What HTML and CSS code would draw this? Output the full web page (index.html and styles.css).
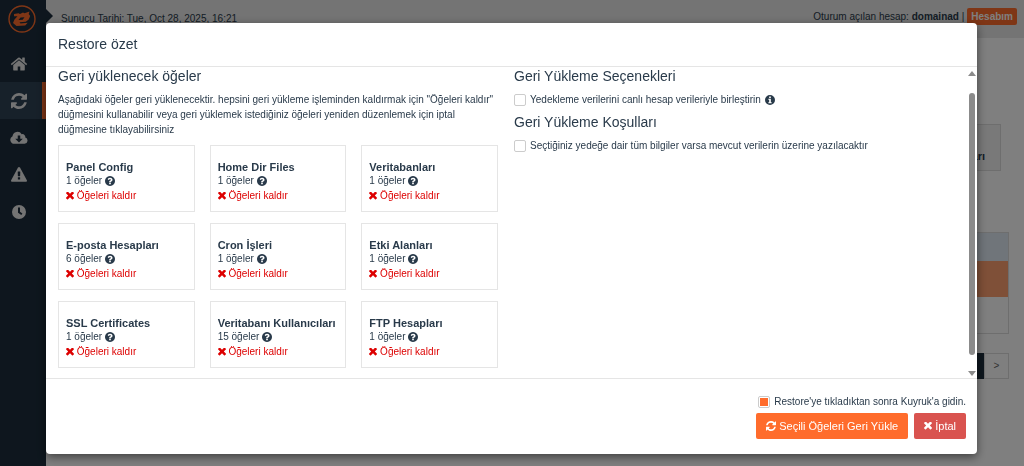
FILE: index.html
```html
<!DOCTYPE html>
<html lang="tr">
<head>
    <meta charset="UTF-8">
    <meta name="viewport" content="width=device-width, initial-scale=1.0">
    <title>Restore özet</title>
    <link rel="stylesheet" href="styles.css">
</head>
<body>
    <svg class="sprite" aria-hidden="true">
        <symbol id="home" viewBox="0 0 1792 1792"><path d="M1472 992v480q0 26-19 45t-45 19h-384v-384h-256v384h-384q-26 0-45-19t-19-45v-480q0-1 .5-3t.5-3l575-474 575 474q1 2 1 6zm223-69l-62 74q-8 9-21 11h-3q-13 0-21-7l-692-577-692 577q-12 8-24 7-13-2-21-11l-62-74q-8-10-7-23.5t11-21.5l719-599q32-26 76-26t76 26l244 204v-195q0-14 9-23t23-9h192q14 0 23 9t9 23v408l219 182q10 8 11 21.5t-7 23.5z"/></symbol>
        <symbol id="refresh" viewBox="128 128 1536 1536"><path d="M1639 1056q0 5-1 7-64 268-268 434.5t-478 166.5q-146 0-282.5-55t-243.5-157l-129 129q-19 19-45 19t-45-19-19-45v-448q0-26 19-45t45-19h448q26 0 45 19t19 45-19 45l-137 137q71 66 161 102t187 36q134 0 250-65t186-179q11-17 53-117 8-23 30-23h192q13 0 22.5 9.5t9.5 22.5zm25-800v448q0 26-19 45t-45 19h-448q-26 0-45-19t-19-45 19-45l138-138q-148-137-349-137-134 0-250 65t-186 179q-11 17-53 117-8 23-30 23h-199q-13 0-22.5-9.5t-9.500-22.5v-7q65-268 270-434.5t480-166.5q146 0 284 55.5t245 156.5l130-129q19-19 45-19t45 19 19 45z"/></symbol>
        <symbol id="cloud" viewBox="0 1 20 15"><path fill-rule="evenodd" d="M4.800 15a4.500 4.500 0 0 1-2-8.500A5.500 5.500 0 0 1 13 4.300a3.200 3.200 0 0 1 4 3.700A3.600 3.600 0 0 1 16.200 15zM8.600 5.800v3.500H5.800L10 13.500l4.200-4.200h-2.800V5.800z"/></symbol>
        <symbol id="warning" viewBox="0 0 1792 1792"><path d="M1024 1375v-190q0-14-9.500-23.500t-22.500-9.500h-192q-13 0-22.500 9.500t-9.500 23.500v190q0 14 9.500 23.500t22.500 9.500h192q13 0 22.500-9.500t9.500-23.500zm-2-374l18-459q0-12-10-19-13-11-24-11h-220q-11 0-24 11-10 7-10 21l17 457q0 10 10 16.500t24 6.500h185q14 0 23.500-6.500t10.500-16.500zm-14-934l768 1408q35 63-2 126-17 29-46.500 46t-63.500 17h-1536q-34 0-63.500-17t-46.500-46q-37-63-2-126l768-1408q17-31 47-49t65-18 65 18 47 49z"/></symbol>
        <symbol id="clock" viewBox="0 0 16 16"><path fill-rule="evenodd" d="M8 1a7 7 0 1 1 0 14A7 7 0 0 1 8 1zM7 3.500v5.200l3.300 2.400 1.100-1.500L9 7.800V3.500z"/></symbol>
        <symbol id="times" viewBox="300 500 1192 1056"><path d="M1490 1322q0 40-28 68l-136 136q-28 28-68 28t-68-28l-294-294-294 294q-28 28-68 28t-68-28l-136-136q-28-28-28-68t28-68l294-294-294-294q-28-28-28-68t28-68l136-136q28-28 68-28t68 28l294 294 294-294q28-28 68-28t68 28l136 136q28 28 28 68t-28 68l-294 294 294 294q28 28 28 68z"/></symbol>
        <symbol id="question" viewBox="128 128 1536 1536"><path d="M1024 1376v-192q0-14-9-23t-23-9h-192q-14 0-23 9t-9 23v192q0 14 9 23t23 9h192q14 0 23-9t9-23zm256-672q0-88-55.500-163t-138.500-116-170-41q-243 0-371 213-15 24 8 42l132 100q7 6 19 6 16 0 25-12 53-68 86-92 34-24 86-24 48 0 85.500 26t37.500 59q0 38-20 61t-68 45q-63 28-115.500 86.500t-52.500 125.500v36q0 14 9 23t23 9h192q14 0 23-9t9-23q0-19 21.500-49.500t54.500-49.500q32-18 49-28.500t46-35 44.500-48 28-60.500 12.500-81zm384 192q0 209-103 385.500t-279.500 279.500-385.500 103-385.500-103-279.500-279.500-103-385.500 103-385.500 279.500-279.500 385.500-103 385.500 103 279.500 279.500 103 385.500z"/></symbol>
        <symbol id="info" viewBox="0 0 12 12"><path fill-rule="evenodd" d="M6 0a6 6 0 1 1 0 12A6 6 0 0 1 6 0zM5 1.800v1.700h2V1.800zM4 4.500v1.200h1v3H4V10h4V8.700H7V4.500z"/></symbol>
    </svg>

    <div class="page">
        <nav class="sidebar">
            <a class="logo" href="#" aria-label="Logo">
                <svg viewBox="0 0 28 28"><circle cx="14" cy="14" r="13" fill="none" stroke="#ff6c2c" stroke-width="1.400"/><path fill="#ff6c2c" fill-rule="evenodd" d="M6 9l4.500-.8L12 9l3-1.500 1.500.8L21.500 6.500l-.8 2.500 1.500 2-1.500 3.500-3 2.300-6.200.4 1 1.300 7.200-.8-2.500 2.800-8.700.5L5 18l1.500-3.500 3-3.300L6 11.300zM12.500 12.500l-2 2.500 4.200-.3 1.800-2.500z"/></svg>
            </a>
            <a class="nav-item" href="#" aria-label="Ana sayfa"><svg class="icon"><use href="#home"/></svg></a>
            <a class="nav-item active" href="#" aria-label="Geri yükle"><svg class="icon small"><use href="#refresh"/></svg></a>
            <a class="nav-item" href="#" aria-label="İndir"><svg class="icon"><use href="#cloud"/></svg></a>
            <a class="nav-item" href="#" aria-label="Uyarılar"><svg class="icon small"><use href="#warning"/></svg></a>
            <a class="nav-item" href="#" aria-label="Geçmiş"><svg class="icon small"><use href="#clock"/></svg></a>
        </nav>
        <div class="content">
            <header class="topbar">
                <span class="pointer"></span>
                <span class="server-date">Sunucu Tarihi: Tue, Oct 28, 2025, 16:21</span>
                <span class="account">Oturum açılan hesap: <b>domainad</b> |</span>
                <button class="account-btn" type="button">Hesabım</button>
            </header>
            <main class="main">
                <div class="tile">arı</div>
                <div class="list">
                    <div class="list-head"></div>
                    <div class="list-row selected"></div>
                    <div class="list-row"></div>
                </div>
                <div class="pager">
                    <span class="current"></span>
                    <a href="#">&gt;</a>
                </div>
            </main>
        </div>
    </div>

    <div class="backdrop">
        <div class="modal" role="dialog" aria-labelledby="modal-title">
            <div class="modal-header">
                <h1 id="modal-title">Restore özet</h1>
            </div>
            <div class="modal-body">
                <div class="columns">
                    <section>
                        <h2>Geri yüklenecek öğeler</h2>
                        <p>Aşağıdaki öğeler geri yüklenecektir. hepsini geri yükleme işleminden kaldırmak için "Öğeleri kaldır" düğmesini kullanabilir veya geri yüklemek istediğiniz öğeleri yeniden düzenlemek için iptal düğmesine tıklayabilirsiniz</p>
                        <div class="items">
                            <div class="item">
                                <h3>Panel Config</h3>
                                <div class="count">1 öğeler <svg class="icon"><use href="#question"/></svg></div>
                                <a href="#"><svg class="icon"><use href="#times"/></svg> Öğeleri kaldır</a>
                            </div>
                            <div class="item">
                                <h3>Home Dir Files</h3>
                                <div class="count">1 öğeler <svg class="icon"><use href="#question"/></svg></div>
                                <a href="#"><svg class="icon"><use href="#times"/></svg> Öğeleri kaldır</a>
                            </div>
                            <div class="item">
                                <h3>Veritabanları</h3>
                                <div class="count">1 öğeler <svg class="icon"><use href="#question"/></svg></div>
                                <a href="#"><svg class="icon"><use href="#times"/></svg> Öğeleri kaldır</a>
                            </div>
                            <div class="item">
                                <h3>E-posta Hesapları</h3>
                                <div class="count">6 öğeler <svg class="icon"><use href="#question"/></svg></div>
                                <a href="#"><svg class="icon"><use href="#times"/></svg> Öğeleri kaldır</a>
                            </div>
                            <div class="item">
                                <h3>Cron İşleri</h3>
                                <div class="count">1 öğeler <svg class="icon"><use href="#question"/></svg></div>
                                <a href="#"><svg class="icon"><use href="#times"/></svg> Öğeleri kaldır</a>
                            </div>
                            <div class="item">
                                <h3>Etki Alanları</h3>
                                <div class="count">1 öğeler <svg class="icon"><use href="#question"/></svg></div>
                                <a href="#"><svg class="icon"><use href="#times"/></svg> Öğeleri kaldır</a>
                            </div>
                            <div class="item">
                                <h3>SSL Certificates</h3>
                                <div class="count">1 öğeler <svg class="icon"><use href="#question"/></svg></div>
                                <a href="#"><svg class="icon"><use href="#times"/></svg> Öğeleri kaldır</a>
                            </div>
                            <div class="item">
                                <h3>Veritabanı Kullanıcıları</h3>
                                <div class="count">15 öğeler <svg class="icon"><use href="#question"/></svg></div>
                                <a href="#"><svg class="icon"><use href="#times"/></svg> Öğeleri kaldır</a>
                            </div>
                            <div class="item">
                                <h3>FTP Hesapları</h3>
                                <div class="count">1 öğeler <svg class="icon"><use href="#question"/></svg></div>
                                <a href="#"><svg class="icon"><use href="#times"/></svg> Öğeleri kaldır</a>
                            </div>
                        </div>
                    </section>
                    <section>
                        <h2>Geri Yükleme Seçenekleri</h2>
                        <div class="option">
                            <input type="checkbox" id="merge">
                            <label for="merge">Yedekleme verilerini canlı hesap verileriyle birleştirin</label>
                            <svg class="icon"><use href="#info"/></svg>
                        </div>
                        <h2>Geri Yükleme Koşulları</h2>
                        <div class="option">
                            <input type="checkbox" id="overwrite">
                            <label for="overwrite">Seçtiğiniz yedeğe dair tüm bilgiler varsa mevcut verilerin üzerine yazılacaktır</label>
                        </div>
                    </section>
                </div>
                <div class="scrollbar">
                    <span class="arrow-up"></span>
                    <span class="thumb"></span>
                    <span class="arrow-down"></span>
                </div>
            </div>
            <div class="modal-footer">
                <div class="queue">
                    <input type="checkbox" id="queue" checked>
                    <label for="queue">Restore'ye tıkladıktan sonra Kuyruk'a gidin.</label>
                </div>
                <div class="buttons">
                    <button class="btn btn-primary" type="button"><svg class="icon"><use href="#refresh"/></svg> Seçili Öğeleri Geri Yükle</button>
                    <button class="btn btn-danger" type="button"><svg class="icon"><use href="#times"/></svg> İptal</button>
                </div>
            </div>
        </div>
    </div>
</body>
</html>
```

FILE: styles.css
```css
* {
    box-sizing: border-box;
}
body {
    margin: 0;
    font-family: "Liberation Sans", Arial, sans-serif;
    font-size: 10px;
    line-height: 15px;
    color: #293a4a;
    background: #fff;
}
h1, h2, h3, p {
    margin: 0;
}
a {
    text-decoration: none;
}
button {
    font-family: inherit;
    border: 0;
    color: #fff;
}
.sprite {
    display: none;
}
.icon {
    width: 10px;
    height: 10px;
    fill: currentColor;
    flex: none;
}

/* page under the modal */
.page {
    display: flex;
    height: 100vh;
    overflow: hidden;
}
.sidebar {
    width: 46px;
    background: #1c2d3c;
    flex: none;
}
.logo {
    display: flex;
    height: 45px;
    padding: 5px 8px;
}
.logo svg {
    width: 28px;
    height: 28px;
}
.nav-item {
    display: flex;
    align-items: center;
    justify-content: center;
    height: 37px;
    padding-right: 8px;
    color: #e6e6e6;
}
.nav-item .icon {
    width: 18px;
    height: 18px;
}
.nav-item .small {
    width: 16px;
    height: 16px;
}
.nav-item.active {
    padding-right: 4px;
    background: #2f4254;
    border-right: 4px solid #ff6c2c;
}
.content {
    flex: 1;
}
.topbar {
    display: flex;
    align-items: center;
    height: 38px;
    padding: 0 7px 6px 0;
    background: #e8e8e8;
}
.pointer {
    border: 7px solid transparent;
    border-left-color: #1c2d3c;
    border-right: 0;
}
.server-date {
    margin: 4px auto 0 8px;
}
.account-btn {
    height: 17px;
    margin-left: 3px;
    padding: 0 4px;
    border-radius: 2px;
    background: #ff6c2c;
    font-size: 10px;
    font-weight: bold;
}
.main {
    padding: 86px 15px 0;
}
.tile {
    height: 47px;
    margin-right: 8px;
    padding: 24px 15px 0;
    border: 1px solid #ddd;
    background: #f2f2f2;
    font-size: 11px;
    font-weight: bold;
    text-align: right;
}
.list {
    margin-top: 61px;
    border: 1px solid #ddd;
}
.list-head {
    height: 28px;
    background: #e0eaf4;
}
.list-row {
    height: 36px;
}
.list-row.selected {
    background: #ffa070;
}
.pager {
    display: flex;
    justify-content: flex-end;
    margin-top: 19px;
}
.pager .current {
    width: 25px;
    background: #1c2d3c;
}
.pager a {
    width: 25px;
    border: 1px solid #ddd;
    color: #666;
    line-height: 24px;
    text-align: center;
}

/* modal */
.backdrop {
    position: fixed;
    inset: 0;
    padding: 23px 47px 11px 46px;
    background: rgba(0, 0, 0, .5);
}
.modal {
    border-radius: 4px;
    background: #fff;
    box-shadow: 0 3px 10px rgba(0, 0, 0, .5);
}
.modal-header {
    padding: 12px;
    border-bottom: 1px solid #e5e5e5;
}
h1, h2 {
    font-size: 14px;
    font-weight: normal;
    line-height: 19px;
}
.modal-body {
    display: flex;
    border-bottom: 1px solid #e5e5e5;
}
.columns {
    flex: 1;
    display: grid;
    grid-template-columns: 1fr 1fr;
    gap: 16px;
    padding: 0 12px 10px 12px;
}
.columns p {
    margin: 6px 0 8px;
}
.items {
    display: grid;
    grid-template-columns: repeat(3, 1fr);
    gap: 11px 15px;
}
.item {
    padding: 14px 7px 8px;
    border: 1px solid #e5e5e5;
    line-height: 14px;
}
.item h3 {
    font-size: 11px;
    line-height: 14px;
}
.item .icon {
    vertical-align: -2px;
}
.item a {
    display: block;
    line-height: 15px;
    color: #d00;
}
.item a .icon {
    width: 8px;
    height: 8px;
    vertical-align: -1px;
}
input[type="checkbox"] {
    appearance: none;
    width: 12px;
    height: 12px;
    margin: 0;
    border: 1px solid #ccc;
    border-radius: 2px;
    background: #fff;
}
.option {
    display: flex;
    align-items: center;
    gap: 4px;
    height: 15px;
    margin: 6px 0;
}
.scrollbar {
    display: flex;
    flex-direction: column;
    align-items: center;
    width: 11px;
    padding: 4px 0 2px;
}
.arrow-up {
    border: 4px solid transparent;
    border-top: 0;
    border-bottom: 5px solid #8b8b8b;
}
.arrow-down {
    border: 4px solid transparent;
    border-bottom: 0;
    border-top: 5px solid #8b8b8b;
}
.thumb {
    flex: 1;
    width: 6px;
    margin: 17px 0 16px;
    border-radius: 3px;
    background: #8b8b8b;
}
.modal-footer {
    display: flex;
    flex-direction: column;
    align-items: flex-end;
    gap: 4px;
    padding: 15px 11px;
}
.queue {
    display: flex;
    align-items: center;
    gap: 4px;
}
.queue input:checked {
    padding: 1px;
    background: #ff6c2c content-box;
}
.buttons {
    display: flex;
    gap: 6px;
}
.btn {
    display: flex;
    align-items: center;
    gap: 3px;
    height: 26px;
    padding: 0 10px;
    border-radius: 2px;
    font-size: 11px;
}
.btn .icon {
    width: 10px;
    height: 10px;
}
.btn-primary {
    background: #ff6c2c;
}
.btn-danger {
    background: #d9534f;
}
.btn-danger .icon {
    width: 8px;
    height: 8px;
}
```
